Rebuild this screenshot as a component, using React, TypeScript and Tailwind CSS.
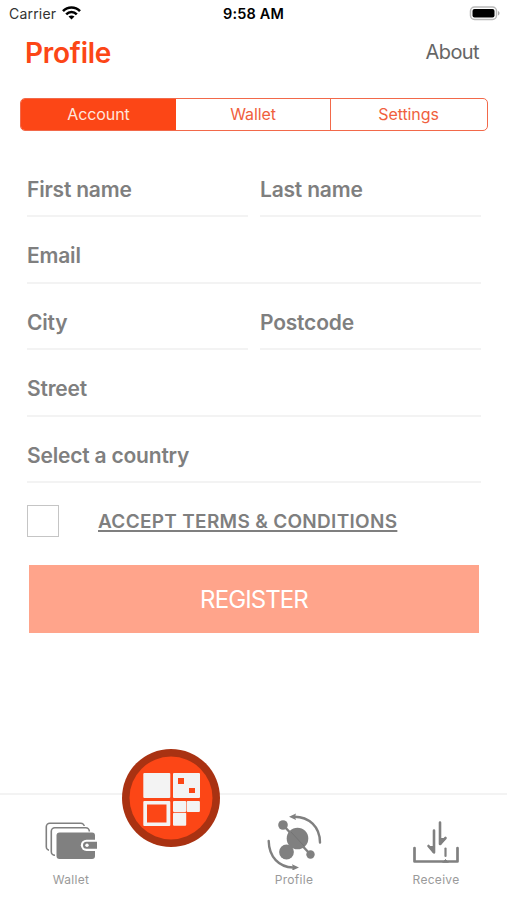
import type { ReactNode } from "react"
import clsx from "clsx"

const Field = ({ label, className }: { label: string; className?: string }) => (
    <div className={clsx("flex h-full items-center border-b-2 border-[#f3f3f3] pt-[12.5px] text-[21px] leading-none font-semibold tracking-[-0.2px] text-[#7f7f7f]", className)}>
        <span>{label}</span>
    </div>
)

const NavItem = ({ label, children }: { label: string; children: ReactNode }) => (
    <a className="flex w-[142px] flex-col items-center pt-[14px]">
        {children}
        <span className="mt-[2px] text-[12px] leading-4 tracking-[0.3px] text-[#9a9a9a]">{label}</span>
    </a>
)

const WifiIcon = () => (
    <svg className="mb-[2px] ml-[6px] h-[14px] w-[19px]" viewBox="0 0 19 14" fill="none" stroke="#000" strokeWidth="2.6">
        <path d="M1 5.1C5.8.3 13.2.3 18 5.1" />
        <path d="M4.2 8.3c3-3 7.6-3 10.6 0" />
        <path d="M9.5 13.6 6.5 10.6c1.7-1.6 4.3-1.6 6 0z" fill="#000" stroke="none" />
    </svg>
)

const BatteryIcon = () => (
    <svg className="h-[15px] w-[31px]" viewBox="0 0 31 15">
        <rect x="1.5" y="1" width="26" height="12.5" rx="4" fill="#fff" stroke="#b9b9b9" strokeWidth="1.5" />
        <rect x="3.5" y="3" width="22" height="8.5" rx="2" fill="#000" />
        <path d="M29 5v4.5c2-.8 2-3.7 0-4.5z" fill="#a9a9a9" />
    </svg>
)

const WalletIcon = () => (
    <svg className="h-[50px] w-[56px]" viewBox="0 0 56 50">
        <g fill="#fff" stroke="#808080" strokeWidth="1.6">
            <rect x="3.3" y="9.3" width="38" height="27" rx="3.5" />
            <rect x="8" y="14" width="38" height="28" rx="3.5" stroke="#fff" strokeWidth="4" />
            <rect x="8.3" y="13.7" width="38" height="27.5" rx="3.5" />
        </g>
        <rect x="12" y="17.5" width="41" height="30" rx="4" fill="#fff" />
        <rect x="13.500" y="18.500" width="38.500" height="26.500" rx="3" fill="#808080" />
        <path d="M56 25.700H43.500a5.500 5.500 0 0 0 0 11.300h12z" fill="#fff" />
        <path d="M54 27.800H43.500a3.500 3.500 0 0 0 0 7H54z" fill="#808080" />
        <circle cx="44" cy="31.300" r="1.700" fill="#fff" />
    </svg>
)

const MoleculeIcon = () => (
    <svg className="h-[60px] w-[56px]" viewBox="0 0 56 60">
        <g fill="none" stroke="#808080" strokeWidth="2.4" strokeLinecap="round">
            <path d="M28 6.700C43 6.500 54 17 54 32.500" />
            <path d="M2.700 31C3 47 13 57 27 57.500" />
            <path d="M17 15 44 44M31 29 20 42" />
        </g>
        <path d="m23 6.700 7-3.200-1 3.200 1 3.200zM33 57.500l-7-3.200 1 3.200-1 3.200z" fill="#808080" />
        <g fill="#808080">
            <circle cx="17" cy="15" r="4.800" />
            <circle cx="31.500" cy="28.500" r="10.800" />
            <circle cx="20.500" cy="42" r="7.400" />
            <circle cx="44.500" cy="44.500" r="4.200" />
        </g>
        <path d="m25 22 13 14" stroke="#747474" />
    </svg>
)

const ReceiveIcon = () => (
    <svg className="h-[52px] w-[50px]" viewBox="0 0 50 52" fill="none" stroke="#808080" strokeLinecap="round" strokeLinejoin="round">
        <path d="M3.500 34v13.500H46.500V34" strokeWidth="2.700" />
        <path d="M34.500 34.500v7.500" strokeWidth="2.200" />
        <path d="m32 48 2.500-2.500 2.500 2.500z" fill="#808080" strokeWidth="1" />
        <path d="M23 16.500v22l-5.500-6.500M29 8.500v21.500l5.500-6" strokeWidth="2.600" />
        <path d="M18.500 32.500h4v6zM34 24.500h-4.500v6z" fill="#808080" strokeWidth="1" />
    </svg>
)

const QrButton = () => (
    <button className="absolute top-[-46px] left-[122px] size-[98px]">
        <svg className="size-full" viewBox="0 0 98 98">
            <circle cx="49" cy="49" r="49" fill="#a93212" />
            <circle cx="49" cy="49" r="41.500" fill="#fc4616" />
            <g fill="#f3f3f3">
                <rect x="21.300" y="24" width="27" height="25" rx="1" />
                <path d="M52 24h25a1 1 0 0 1 1 1v23a1 1 0 0 1-1 1H52a1 1 0 0 1-1-1V25a1 1 0 0 1 1-1zm4 5v6h6v-6zm11 10v5h6v-5z" fillRule="evenodd" />
                <path d="M22.300 52h25a1 1 0 0 1 1 1v23a1 1 0 0 1-1 1h-25a1 1 0 0 1-1-1V53a1 1 0 0 1 1-1zm2.700 3.500v18h19.500v-18z" fillRule="evenodd" />
                <rect x="51" y="52" width="13.200" height="11" rx="1" />
                <rect x="64.700" y="52" width="13.200" height="11" rx="1" />
                <rect x="51" y="63.800" width="13.200" height="13" rx="1" />
            </g>
        </svg>
    </button>
)

const App = () => {
    return (
        <div className="flex h-[900px] w-[507px] flex-col overflow-hidden bg-white font-[Inter,sans-serif]">
            <div className="grid h-[27px] grid-cols-3 items-center pr-[7px] pl-[9px] text-[14px] leading-none">
                <div className="flex items-center">
                    <span className="tracking-[0.2px] text-[#333]">Carrier</span>
                    <WifiIcon />
                </div>
                <span className="pt-px pr-[2px] text-center text-[14.5px] font-semibold tracking-[0.15px] whitespace-nowrap text-black">9:58 AM</span>
                <div className="flex justify-end">
                    <BatteryIcon />
                </div>
            </div>

            <header className="flex h-[71px] items-start justify-between pr-[28px] pl-[25px]">
                <h1 className="pt-[8px] text-[28px] leading-9 font-semibold tracking-[-0.25px] text-[#fc4616]">Profile</h1>
                <span className="pt-[7px] text-[20px] leading-9 tracking-[-0.6px] text-[#666]">About</span>
            </header>

            <div className="mr-[19px] ml-[20px] grid h-[33px] shrink-0 grid-cols-[155px_154px_1fr] overflow-hidden rounded-[5px] border-[1.5px] border-[#f2694a] pb-px text-[16px] tracking-[-0.1px] text-[#f05f3e]">
                <div className="-mb-px flex items-center justify-center bg-[#fc4616] pb-px text-[#ffe5dd]">Account</div>
                <div className="flex items-center justify-center">Wallet</div>
                <div className="-mb-px flex items-center justify-center border-l border-[#f2694a] pr-px pb-px">Settings</div>
            </div>

            <form className="mt-[20px] pr-[26px] pl-[27px]">
                <div className="grid h-[332px] grid-cols-2 grid-rows-5 gap-x-[12px]">
                    <Field label="First name" />
                    <Field label="Last name" />
                    <Field label="Email" className="col-span-2" />
                    <Field label="City" />
                    <Field label="Postcode" />
                    <Field label="Street" className="col-span-2" />
                    <Field label="Select a country" className="col-span-2" />
                </div>
                <div className="mt-[22px] flex h-[32px] items-center">
                    <div className="size-[32px] border border-[#c5c5c5]" />
                    <span className="ml-[39px] text-[19px] leading-none font-semibold tracking-[0.3px] text-[#7f7f7f] underline decoration-[1.5px] underline-offset-[2px] [text-decoration-skip-ink:none]">
                        ACCEPT TERMS & CONDITIONS
                    </span>
                </div>
                <button className="mt-[28px] ml-[2px] h-[68px] w-[450px] bg-[#ffa48b] pt-[2px] text-[24px] tracking-[-0.9px] text-white">
                    REGISTER
                </button>
            </form>

            <nav className="relative mt-auto flex h-[107px] shrink-0 border-t-2 border-[#f3f3f3]">
                <NavItem label="Wallet">
                    <div className="flex h-[61px] items-start pt-[5px]">
                        <WalletIcon />
                    </div>
                </NavItem>
                <div className="w-[81px]" />
                <NavItem label="Profile">
                    <div className="flex h-[61px] items-start pt-px">
                        <MoleculeIcon />
                    </div>
                </NavItem>
                <NavItem label="Receive">
                    <div className="flex h-[61px] items-start pt-[5px]">
                        <ReceiveIcon />
                    </div>
                </NavItem>
                <QrButton />
            </nav>
        </div>
    )
}
export default App
